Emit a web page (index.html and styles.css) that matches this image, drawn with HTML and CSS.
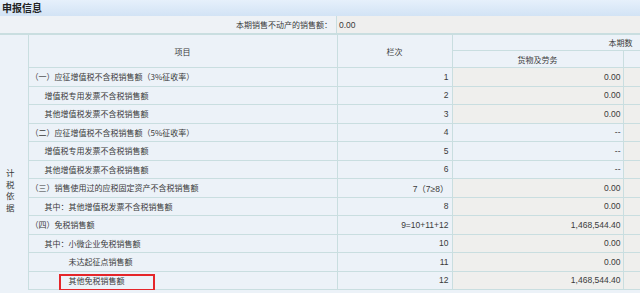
FILE: index.html
```html
<!DOCTYPE html>
<html lang="zh">
<head>
<meta charset="utf-8">
<link rel="stylesheet" href="styles.css">
</head>
<body>
<div class="panel">
  <div class="title">申报信息</div>
  <div class="info">
    <div class="info-label">本期销售不动产的销售额：</div>
    <div class="info-value">0.00</div>
  </div>
  <table class="grid">
    <colgroup>
      <col class="c-side"><col class="c-item"><col class="c-no"><col class="c-val"><col class="c-extra">
    </colgroup>
    <tr class="h1">
      <td class="side" rowspan="14"><div class="vtext">计税依据</div></td>
      <td class="hd" rowspan="2">项目</td>
      <td class="hd" rowspan="2">栏次</td>
      <td class="hd right" colspan="2">本期数</td>
    </tr>
    <tr class="h2">
      <td class="hd">货物及劳务</td>
      <td class="hd"></td>
    </tr>
    <tr><td class="item l1">（一）应征增值税不含税销售额（3%征收率）</td><td class="no">1</td><td class="val gray">0.00</td><td class="gray"></td></tr>
    <tr><td class="item l2">增值税专用发票不含税销售额</td><td class="no">2</td><td class="val gray">0.00</td><td class="gray"></td></tr>
    <tr><td class="item l2">其他增值税发票不含税销售额</td><td class="no">3</td><td class="val gray">0.00</td><td class="gray"></td></tr>
    <tr><td class="item l1">（二）应征增值税不含税销售额（5%征收率）</td><td class="no">4</td><td class="val">--</td><td class="gray"></td></tr>
    <tr><td class="item l2">增值税专用发票不含税销售额</td><td class="no">5</td><td class="val">--</td><td class="gray"></td></tr>
    <tr><td class="item l2">其他增值税发票不含税销售额</td><td class="no">6</td><td class="val">--</td><td class="gray"></td></tr>
    <tr><td class="item l1">（三）销售使用过的应税固定资产不含税销售额</td><td class="no">7（7≥8）</td><td class="val gray">0.00</td><td class="gray"></td></tr>
    <tr><td class="item l2">其中：其他增值税发票不含税销售额</td><td class="no">8</td><td class="val gray">0.00</td><td class="gray"></td></tr>
    <tr><td class="item l1">（四）免税销售额</td><td class="no">9=10+11+12</td><td class="val gray">1,468,544.40</td><td class="gray"></td></tr>
    <tr><td class="item l2">其中：小微企业免税销售额</td><td class="no">10</td><td class="val gray">0.00</td><td class="gray"></td></tr>
    <tr><td class="item l3">未达起征点销售额</td><td class="no">11</td><td class="val gray">0.00</td><td class="gray"></td></tr>
    <tr><td class="item l3 marked">其他免税销售额<span class="mark"></span></td><td class="no">12</td><td class="val gray">1,468,544.40</td><td class="gray"></td></tr>
  </table>
</div>
</body>
</html>
```

FILE: styles.css
```css
html, body {
  margin: 0;
  padding: 0;
  background: #ecf2f8;
  overflow: hidden;
}
.panel {
  width: 640px;
  font-family: "Noto Sans CJK SC", "Liberation Sans", sans-serif;
  font-size: 8px;
  color: #3a3a3a;
}
.title {
  height: 16px;
  line-height: 15px;
  padding-left: 2px;
  font-size: 10px;
  font-weight: bold;
  color: #222;
  background: linear-gradient(#e6f0fb, #d2e3f5);
  box-sizing: border-box;
}
.info {
  display: flex;
  height: 18px;
  line-height: 18px;
  background: #eef2f6;
  border-bottom: 1px solid #c9dee0;
  box-sizing: border-box;
}
.info-label {
  width: 337px;
  box-sizing: border-box;
  padding-right: 4px;
  text-align: right;
  border-right: 1px solid #c9dee0;
}
.info-value {
  flex: 1;
  padding-left: 2px;
  font-family: "Liberation Sans", sans-serif;
  font-size: 8.5px;
  background: #efefee;
}
.grid {
  border-collapse: collapse;
  table-layout: fixed;
  width: 640px;
}
.c-side { width: 28px; }
.c-item { width: 309px; }
.c-no { width: 115px; }
.c-val { width: 171px; }
.c-extra { width: 17px; }
.grid td {
  border: 1px solid #c9dee0;
  padding: 0;
  height: 17.5px;
  white-space: nowrap;
  overflow: hidden;
}
.grid tr.h1 td { height: 15px; }
.grid tr.h2 td { height: 16px; }
.grid td.side {
  border-left: none;
  border-bottom: none;
  vertical-align: top;
  padding-top: 132px;
}
.vtext {
  width: 9px;
  margin-left: 6px;
  font-size: 8.5px;
  line-height: 11.7px;
  white-space: normal;
  word-break: break-all;
}
.hd { text-align: center; }
.hd.right { text-align: right; padding-right: 7px !important; }
.item { text-align: left; }
.l1 { padding-left: 2px !important; }
.l2 { padding-left: 16px !important; }
.l3 { padding-left: 40px !important; }
.no {
  text-align: right;
  padding-right: 3px !important;
  font-family: "Liberation Sans", "Noto Sans CJK SC", sans-serif;
  font-size: 8.5px;
}
.val {
  text-align: right;
  padding-right: 2px !important;
  font-family: "Liberation Sans", sans-serif;
  font-size: 8.5px;
}
.gray { background: #efefed; }
.marked { position: relative; overflow: visible !important; }
.mark {
  position: absolute;
  left: 30px;
  top: 2px;
  width: 96px;
  height: 17px;
  border: 2px solid #e5262a;
  box-sizing: border-box;
}
```
